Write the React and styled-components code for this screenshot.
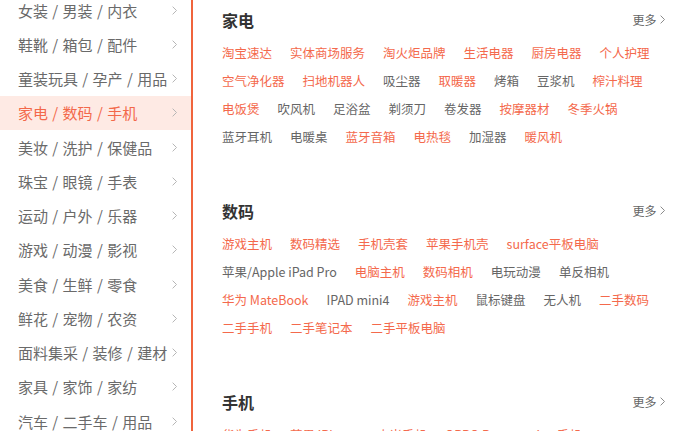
import React from "react"
import styled, { createGlobalStyle } from "styled-components"

const GlobalStyle = createGlobalStyle`
  html, body {
    margin: 0;
    padding: 0;
    background: #fff;
    overflow: hidden;
    font-family: "Noto Sans CJK SC", "Noto Sans", sans-serif;
  }
`

const categories = [
  "女装 / 男装 / 内衣",
  "鞋靴 / 箱包 / 配件",
  "童装玩具 / 孕产 / 用品",
  "家电 / 数码 / 手机",
  "美妆 / 洗护 / 保健品",
  "珠宝 / 眼镜 / 手表",
  "运动 / 户外 / 乐器",
  "游戏 / 动漫 / 影视",
  "美食 / 生鲜 / 零食",
  "鲜花 / 宠物 / 农资",
  "面料集采 / 装修 / 建材",
  "家具 / 家饰 / 家纺",
  "汽车 / 二手车 / 用品",
]

// 1 = highlighted (orange), 0 = plain gray
const sections = [
  {
    title: "家电",
    items: [
      ["淘宝速达", 1], ["实体商场服务", 1], ["淘火炬品牌", 1], ["生活电器", 1], ["厨房电器", 1], ["个人护理", 1],
      ["空气净化器", 1], ["扫地机器人", 1], ["吸尘器", 0], ["取暖器", 1], ["烤箱", 0], ["豆浆机", 0], ["榨汁料理", 1],
      ["电饭煲", 1], ["吹风机", 0], ["足浴盆", 0], ["剃须刀", 0], ["卷发器", 0], ["按摩器材", 1], ["冬季火锅", 1],
      ["蓝牙耳机", 0], ["电暖桌", 0], ["蓝牙音箱", 1], ["电热毯", 1], ["加湿器", 0], ["暖风机", 1],
    ],
  },
  {
    title: "数码",
    items: [
      ["游戏主机", 1], ["数码精选", 1], ["手机壳套", 1], ["苹果手机壳", 1], ["surface平板电脑", 1],
      ["苹果/Apple iPad Pro", 0], ["电脑主机", 1], ["数码相机", 1], ["电玩动漫", 0], ["单反相机", 0],
      ["华为 MateBook", 1], ["IPAD mini4", 0], ["游戏主机", 1], ["鼠标键盘", 0], ["无人机", 0], ["二手数码", 1],
      ["二手手机", 1], ["二手笔记本", 1], ["二手平板电脑", 1],
    ],
  },
  {
    title: "手机",
    items: [
      ["华为手机", 1], ["苹果 iPhone", 1], ["小米手机", 1], ["OPPO Reno", 1], ["vivo 手机", 1],
    ],
  },
]

const Chevron = ({ size = 9, color = "#b5b5b5" }) => (
  <svg width={size * 0.6} height={size} viewBox="0 0 6 10" fill="none">
    <path d="M1 1l4 4-4 4" stroke={color} strokeWidth="1.1" strokeLinecap="round" strokeLinejoin="round" />
  </svg>
)

export default function App() {
  return (
    <>
      <GlobalStyle />
      <Page>
        <Sidebar>
          <CategoryList>
            {categories.map((name, i) => (
              <CategoryRow key={name} $active={i === 3}>
                <span>{name}</span>
                <Chevron />
              </CategoryRow>
            ))}
          </CategoryList>
        </Sidebar>
        <Panel>
          {sections.map(({ title, items }) => (
            <Section key={title}>
              <SectionHeader>
                <SectionTitle>{title}</SectionTitle>
                <More>
                  更多
                  <Chevron size={9} color="#888" />
                </More>
              </SectionHeader>
              <ItemGrid>
                {items.map(([label, h], i) => (
                  <Item key={i} $highlight={h === 1}>
                    {label}
                  </Item>
                ))}
              </ItemGrid>
            </Section>
          ))}
        </Panel>
      </Page>
    </>
  )
}

const Page = styled.div`
  display: flex;
  width: 677px;
  height: 431px;
  overflow: hidden;
`

const Sidebar = styled.aside`
  width: 191px;
  flex-shrink: 0;
  border-right: 2px solid #f0643c;
  overflow: hidden;
  background: #fff;
`

const CategoryList = styled.ul`
  list-style: none;
  margin: -7px 0 0;
  padding: 0;
`

const CategoryRow = styled.li`
  display: flex;
  align-items: center;
  justify-content: space-between;
  height: 34.25px;
  padding: 0 14px 0 18px;
  font-size: 15px;
  color: ${p => (p.$active ? "#f3684a" : "#6a6a6a")};
  background: ${p => (p.$active ? "#feeae4" : "transparent")};
  white-space: nowrap;
  span {
    word-spacing: 1px;
  }
`

const Panel = styled.main`
  flex: 1;
  padding: 0 12px 0 29px;
  overflow: hidden;
`

const Section = styled.section`
  margin-bottom: 40px;
`

const SectionHeader = styled.div`
  display: flex;
  align-items: center;
  justify-content: space-between;
  height: 39px;
`

const SectionTitle = styled.h3`
  margin: 0;
  font-size: 16px;
  font-weight: bold;
  color: #333;
`

const More = styled.span`
  display: flex;
  align-items: center;
  gap: 3px;
  font-size: 12px;
  color: #666;
`

const ItemGrid = styled.div`
  display: flex;
  flex-wrap: wrap;
  column-gap: 18px;
`

const Item = styled.span`
  font-size: 12.5px;
  line-height: 28px;
  color: ${p => (p.$highlight ? "#f4694c" : "#666")};
  white-space: nowrap;
`
